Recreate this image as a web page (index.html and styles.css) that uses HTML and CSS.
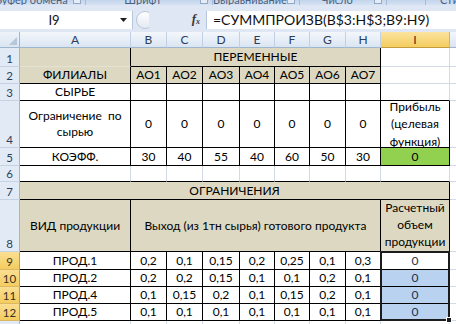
FILE: index.html
```html
<!DOCTYPE html>
<html lang="ru">
<head>
<meta charset="utf-8">
<link rel="stylesheet" href="styles.css">
</head>
<body>
<div class="app">
  <div class="ribbon">
    <div class="grp g1"><span class="lbl">Буфер обмена</span><i class="ln"></i></div>
    <div class="grp g2"><span class="lbl">Шрифт</span><i class="ln"></i></div>
    <div class="grp g3"><span class="lbl">Выравнивание</span><i class="ln"></i></div>
    <div class="grp g4"><span class="lbl">Число</span><i class="ln"></i></div>
    <div class="grp g5"><span class="lbl"></span></div>
    <div class="grp g6"><span class="lbl lft">Стили</span></div>
  </div>

  <div class="fbar">
    <div class="namebox">
      <span class="nm">I9</span>
      <svg class="dd" width="7" height="4" viewBox="0 0 7 4"><path d="M0 0h7L3.5 4z" fill="#1e1e1e"/></svg>
    </div>
    <div class="fmid">
      <svg class="knob" width="14" height="18" viewBox="0 0 14 18">
        <defs><linearGradient id="kg" x1="0" y1="0" x2="0" y2="1"><stop offset="0" stop-color="#ffffff"/><stop offset="1" stop-color="#e2e9f3"/></linearGradient></defs>
        <circle cx="10" cy="9" r="8.5" fill="url(#kg)" stroke="#b9c6d8"/>
      </svg>
      <span class="fx">f<sub>x</sub></span>
    </div>
    <div class="finput">=СУММПРОИЗВ(B$3:H$3;B9:H9)</div>
  </div>

  <div class="sheet">
    <!-- column headers -->
    <div class="corner"><svg width="8" height="8" viewBox="0 0 8 8"><path d="M8 0V8H0z" fill="#b6c6da"/></svg></div>
    <div class="ch">A</div>
    <div class="ch">B</div>
    <div class="ch">C</div>
    <div class="ch">D</div>
    <div class="ch">E</div>
    <div class="ch">F</div>
    <div class="ch">G</div>
    <div class="ch">H</div>
    <div class="ch sel">I</div>
    <div class="ch j"></div>

    <!-- row 1 -->
    <div class="rh">1</div>
    <div class="c t kr a1"></div>
    <div class="c t k s7">ПЕРЕМЕННЫЕ</div>
    <div class="c"></div>
    <div class="c j"></div>

    <!-- row 2 -->
    <div class="rh">2</div>
    <div class="c t k">ФИЛИАЛЫ</div>
    <div class="c t k">АО1</div>
    <div class="c t k">АО2</div>
    <div class="c t k">АО3</div>
    <div class="c t k">АО4</div>
    <div class="c t k">АО5</div>
    <div class="c t k">АО6</div>
    <div class="c t k">АО7</div>
    <div class="c"></div>
    <div class="c j"></div>

    <!-- row 3 -->
    <div class="rh">3</div>
    <div class="c k">СЫРЬЕ</div>
    <div class="c k"></div>
    <div class="c k"></div>
    <div class="c k"></div>
    <div class="c k"></div>
    <div class="c k"></div>
    <div class="c k"></div>
    <div class="c k"></div>
    <div class="c kb"></div>
    <div class="c j"></div>

    <!-- row 4 -->
    <div class="rh">4</div>
    <div class="c k wrap l16">Ограничение&nbsp; по<br>сырью</div>
    <div class="c k">0</div>
    <div class="c k">0</div>
    <div class="c k">0</div>
    <div class="c k">0</div>
    <div class="c k">0</div>
    <div class="c k">0</div>
    <div class="c k">0</div>
    <div class="c k wrap l175">Прибыль<br>(целевая<br>функция)</div>
    <div class="c j"></div>

    <!-- row 5 -->
    <div class="rh">5</div>
    <div class="c k">КОЭФФ.</div>
    <div class="c k">30</div>
    <div class="c k">40</div>
    <div class="c k">55</div>
    <div class="c k">40</div>
    <div class="c k">60</div>
    <div class="c k">50</div>
    <div class="c k">30</div>
    <div class="c k g">0</div>
    <div class="c j"></div>

    <!-- row 6 -->
    <div class="rh">6</div>
    <div class="c kb"></div>
    <div class="c kb"></div>
    <div class="c kb"></div>
    <div class="c kb"></div>
    <div class="c kb"></div>
    <div class="c kb"></div>
    <div class="c kb"></div>
    <div class="c kb"></div>
    <div class="c kb"></div>
    <div class="c j"></div>

    <!-- row 7 -->
    <div class="rh">7</div>
    <div class="c t k s9">ОГРАНИЧЕНИЯ</div>
    <div class="c j"></div>

    <!-- row 8 -->
    <div class="rh">8</div>
    <div class="c t k">ВИД продукции</div>
    <div class="c t k s7">Выход (из 1тн сырья) готового продукта</div>
    <div class="c t k wrap l165">Расчетный<br>объем<br>продукции</div>
    <div class="c j"></div>

    <!-- row 9 -->
    <div class="rh hl">9</div>
    <div class="c k">ПРОД.1</div>
    <div class="c k">0,2</div>
    <div class="c k">0,1</div>
    <div class="c k">0,15</div>
    <div class="c k">0,2</div>
    <div class="c k">0,25</div>
    <div class="c k">0,1</div>
    <div class="c k">0,3</div>
    <div class="c k sv">0</div>
    <div class="c j"></div>

    <!-- row 10 -->
    <div class="rh hl">10</div>
    <div class="c k">ПРОД.2</div>
    <div class="c k">0,2</div>
    <div class="c k">0,2</div>
    <div class="c k">0,15</div>
    <div class="c k">0,1</div>
    <div class="c k">0,1</div>
    <div class="c k">0,2</div>
    <div class="c k">0,1</div>
    <div class="c k sv bl">0</div>
    <div class="c j"></div>

    <!-- row 11 -->
    <div class="rh hl">11</div>
    <div class="c k">ПРОД.4</div>
    <div class="c k">0,1</div>
    <div class="c k">0,15</div>
    <div class="c k">0,2</div>
    <div class="c k">0,1</div>
    <div class="c k">0,15</div>
    <div class="c k">0,2</div>
    <div class="c k">0,1</div>
    <div class="c k sv bl">0</div>
    <div class="c j"></div>

    <!-- row 12 -->
    <div class="rh hl">12</div>
    <div class="c k">ПРОД.5</div>
    <div class="c k">0,1</div>
    <div class="c k">0,1</div>
    <div class="c k">0,1</div>
    <div class="c k">0,1</div>
    <div class="c k">0,1</div>
    <div class="c k">0,1</div>
    <div class="c k">0,1</div>
    <div class="c k sv bl">0</div>
    <div class="c j"></div>

    <!-- row 13 (partial) -->
    <div class="rh last"></div>
    <div class="c last"></div>
    <div class="c last"></div>
    <div class="c last"></div>
    <div class="c last"></div>
    <div class="c last"></div>
    <div class="c last"></div>
    <div class="c last"></div>
    <div class="c last"></div>
    <div class="c last"></div>
    <div class="c j last"></div>

    <!-- selection outline over I9:I12 -->
    <div class="selbox"><i class="handle"></i></div>
  </div>
</div>
</body>
</html>
```

FILE: styles.css
```css
* {
  box-sizing: border-box;
  margin: 0;
  padding: 0;
}

html, body {
  width: 456px;
  height: 324px;
  overflow: hidden;
  background: #ffffff;
}

body {
  font-family: Lato, "Noto Sans", sans-serif;
  color: #000;
}

.app {
  width: 456px;
  height: 324px;
  overflow: hidden;
}

/* ---------- ribbon group labels (cut off) ---------- */
.ribbon {
  display: flex;
  height: 5px;
  overflow: hidden;
  background: linear-gradient(#c4d5ec, #d4e2f3);
}

.grp {
  flex: none;
  display: flex;
  align-items: flex-start;
  border-right: 1px solid #a6bbd6;
}

.lbl {
  flex: 1;
  text-align: center;
  font-size: 11px;
  line-height: 11px;
  margin-top: -6px;
  color: #4a5f7e;
  white-space: nowrap;
}

.lbl.lft {
  text-align: left;
  padding-left: 14px;
}

.ln {
  flex: none;
  width: 8px;
  height: 8px;
  margin: -4px 4px 0 0;
  border: 1px solid #93a9c6;
  background: #e3ecf7;
}

.g1 { width: 96px; margin-left: -10px; }
.g2 { width: 127px; }
.g3 { width: 87px; }
.g4 { width: 87px; }
.g5 { width: 39px; }
.g6 { flex: 1; border-right: 0; }

/* ---------- formula bar ---------- */
.fbar {
  display: flex;
  height: 27px;
  padding: 6px 0 3px;
  background: #dee7f3;
}

.namebox {
  width: 133px;
  display: flex;
  align-items: center;
  background: #ffffff;
  border-right: 1px solid #b6c6dc;
}

.nm {
  flex: 1;
  text-align: center;
  font-size: 13px;
  padding-right: 12px;
  color: #111;
}

.dd {
  flex: none;
  margin-right: 5px;
}

.fmid {
  width: 74px;
  display: flex;
  align-items: center;
  border-right: 1px solid #b6c6dc;
}

.knob {
  flex: none;
  margin-left: 2px;
}

.fx {
  margin-left: auto;
  margin-right: 6px;
  font-family: "Liberation Serif", "DejaVu Serif", serif;
  font-style: italic;
  font-weight: bold;
  font-size: 13px;
  color: #3a3a3a;
  line-height: 14px;
}

.fx sub {
  font-size: 8px;
  vertical-align: -1px;
}

.finput {
  flex: 1;
  background: #ffffff;
  font-size: 14px;
  line-height: 18px;
  padding-left: 6px;
  color: #111;
  white-space: nowrap;
}

/* ---------- sheet ---------- */
.sheet {
  position: relative;
  display: grid;
  grid-template-columns: 20px 111px 36px 36px 37px 35px 35px 36px 35px 69px 6px;
  grid-template-rows: 16px 19px 17px 17px 47px 18px 16px 18px 52px 18px 17px 17px 17px 3px;
  font-size: 12px;
}

.corner {
  display: flex;
  align-items: flex-end;
  justify-content: flex-end;
  padding: 0 2px 2px 0;
  background: linear-gradient(#eef3f9, #dbe5f2);
  border-right: 1px solid #9eb6ce;
  border-bottom: 1px solid #9eb6ce;
}

.ch {
  display: flex;
  align-items: center;
  justify-content: center;
  font-size: 12px;
  color: #2a3f5e;
  background: linear-gradient(#f3f7fb, #dae5f2);
  border-right: 1px solid #c1d0e3;
  border-bottom: 1px solid #9eb6ce;
}

.ch.sel {
  background: linear-gradient(#fbe39f, #f5cd5f);
  border-right-color: #d8b55d;
  border-bottom-color: #c39c3f;
  color: #3b3220;
}

.rh {
  display: flex;
  align-items: flex-end;
  justify-content: center;
  padding-bottom: 1px;
  font-size: 11.5px;
  line-height: 13px;
  color: #2a3f5e;
  background: #e2eaf5;
  border-right: 1px solid #9eb6ce;
  border-bottom: 1px solid #c4d2e4;
}

.rh.hl {
  background: linear-gradient(#fadf93, #f4cc5f);
  border-right-color: #c59d40;
  border-bottom-color: #dcb862;
  color: #3b3220;
}

.c {
  display: flex;
  align-items: center;
  justify-content: center;
  text-align: center;
  white-space: nowrap;
  line-height: 14px;
  border-right: 1px solid #d3dae6;
  border-bottom: 1px solid #d3dae6;
}

.t { background: #dcd8c2; }
.g { background: #92d050; }
.bl { background: #b9d2f0; }
.sv { color: #1a3352; }

.k {
  border-right-color: #000;
  border-bottom-color: #000;
}

.kr { border-right-color: #000; }
.kb { border-bottom-color: #000; }
.a1 { border-bottom-color: #e6e2d2; }

.j { border-right: 0; }
.last { border-bottom: 0; padding: 0; }

.s7 { grid-column: span 7; }
.s9 { grid-column: span 9; }

.wrap { white-space: normal; }
.l16 { line-height: 16px; }
.l165 { line-height: 16.7px; }
.l175 { line-height: 17.5px; }

.selbox {
  position: absolute;
  grid-area: 10 / 10 / 14 / 11;
  top: -1px;
  left: -1px;
  right: 0;
  bottom: 0;
  border: 2px solid #1c1c1c;
  pointer-events: none;
}

.handle {
  position: absolute;
  right: -4px;
  bottom: -4px;
  width: 6px;
  height: 6px;
  background: #1c1c1c;
  border: 1px solid #ffffff;
}
```
